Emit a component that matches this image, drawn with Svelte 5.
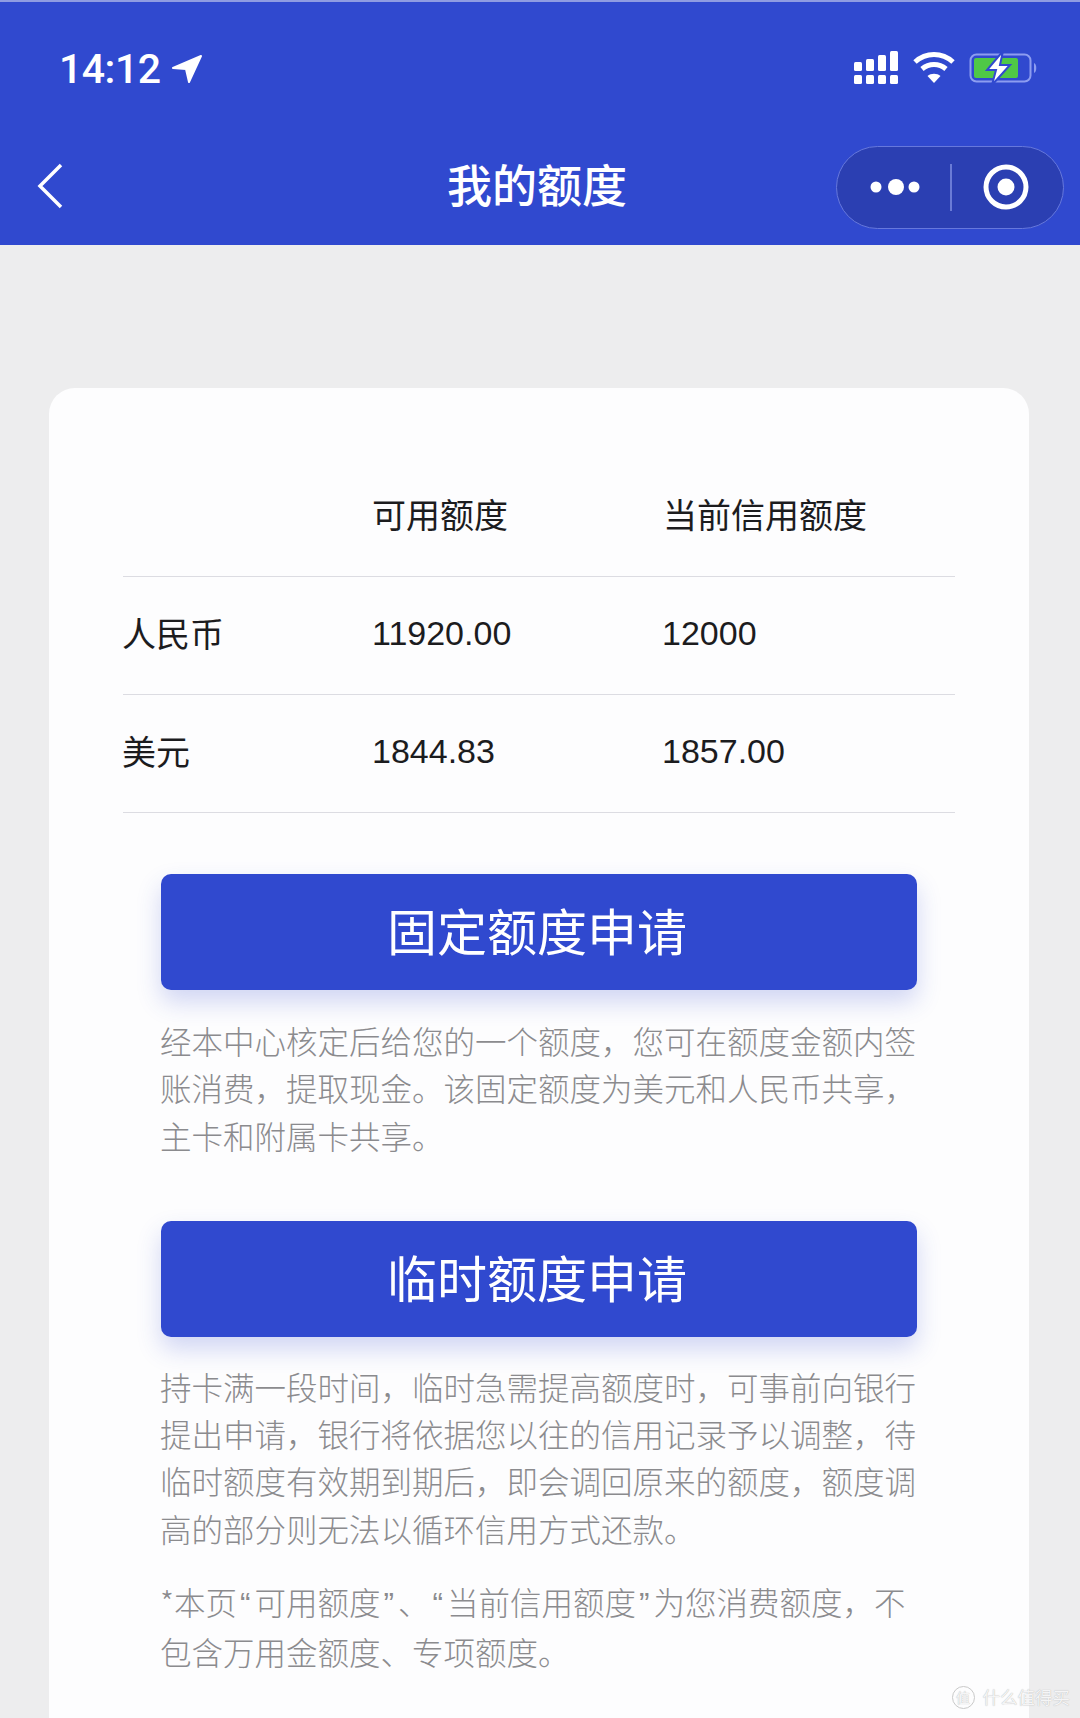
<script>
  const rows = [
    { name: '人民币', avail: '11920.00', limit: '12000' },
    { name: '美元', avail: '1844.83', limit: '1857.00' }
  ];
</script>

<div class="page" lang="zh-CN">
  <header class="top">
    <div class="status">
      <div class="clock">
        <span class="time">14:12</span>
        <svg class="loc" viewBox="0 0 32 30" width="32" height="30"><path d="M2 14 L30 2 L18 28 L15 15 Z" fill="#fff" stroke="#fff" stroke-width="2" stroke-linejoin="round"/></svg>
      </div>
      <div class="sys">
        <svg viewBox="0 0 46 34" width="46" height="34" fill="#fff">
          <rect x="1" y="11" width="8" height="9" rx="1.5"/><rect x="13" y="8" width="8" height="12" rx="1.5"/><rect x="25" y="4" width="8" height="16" rx="1.5"/><rect x="37" y="0" width="8" height="20" rx="1.5"/>
          <rect x="1" y="24" width="8" height="9" rx="1.5"/><rect x="13" y="24" width="8" height="9" rx="1.5"/><rect x="25" y="24" width="8" height="9" rx="1.5"/><rect x="37" y="24" width="8" height="9" rx="1.5"/>
        </svg>
        <svg viewBox="0 0 44 32" width="44" height="32" fill="none" stroke="#fff" stroke-width="5">
          <path d="M3 10 C14 0 30 0 41 10"/><path d="M10 17 C17 11 27 11 34 17"/><path d="M22 31 L15.5 24 C19 21 25 21 28.5 24 Z" fill="#fff" stroke="none"/>
        </svg>
        <svg viewBox="0 0 70 34" width="70" height="34">
          <rect x="1.5" y="3.5" width="60" height="27" rx="6" fill="none" stroke="#8d9df0" stroke-width="2"/>
          <rect x="5" y="7" width="44" height="20" rx="2" fill="#4fc846"/>
          <path d="M65 12 C68 13 68 21 65 22 Z" fill="#8d9df0"/>
          <path d="M34 0 L18 19 L27 19 L23 34 L41 14 L31 14 Z" fill="#fff" stroke="#3049cf" stroke-width="2"/>
        </svg>
      </div>
    </div>
    <nav class="bar">
      <svg class="back" viewBox="0 0 26 46" width="26" height="46"><path d="M24 2 L3 23 L24 44" fill="none" stroke="#fff" stroke-width="3.5"/></svg>
      <h1>我的额度</h1>
      <div class="capsule">
        <svg viewBox="0 0 50 20" width="50" height="20" fill="#fff"><circle cx="6" cy="10" r="5.5"/><circle cx="26" cy="10" r="8"/><circle cx="44" cy="10" r="5.5"/></svg>
        <span class="sep"></span>
        <svg viewBox="0 0 46 46" width="46" height="46"><circle cx="23" cy="23" r="20" fill="none" stroke="#fff" stroke-width="5"/><circle cx="23" cy="23" r="8.5" fill="#fff"/></svg>
      </div>
    </nav>
  </header>

  <main class="card">
    <div class="table">
      <div class="row head"><span></span><span class="label">可用额度</span><span class="label">当前信用额度</span></div>
      {#each rows as r}
        <div class="row"><span class="name">{r.name}</span><span class="num">{r.avail}</span><span class="num pull">{r.limit}</span></div>
      {/each}
    </div>

    <section class="block first">
      <button>固定额度申请</button>
      <p>经本中心核定后给您的一个额度，您可在额度金额内签<br>账消费，提取现金。该固定额度为美元和人民币共享，<br>主卡和附属卡共享。</p>
    </section>

    <section class="block second">
      <button>临时额度申请</button>
      <p class="tight">持卡满一段时间，临时急需提高额度时，可事前向银行<br>提出申请，银行将依据您以往的信用记录予以调整，待<br>临时额度有效期到期后，即会调回原来的额度，额度调<br>高的部分则无法以循环信用方式还款。</p>
      <p class="note">*本页<span class="q">“</span>可用额度<span class="q">”</span>、<span class="q">“</span>当前信用额度<span class="q">”</span>为您消费额度，不<br>包含万用金额度、专项额度。</p>
    </section>
  </main>

  <div class="mark">
    <span class="ring">值</span><span>什么值得买</span>
  </div>
</div>

<style>
  :global(body) { margin: 0; }
  .page {
    position: relative;
    width: 1080px;
    height: 1718px;
    overflow: hidden;
    background: #ededee;
    display: flex;
    flex-direction: column;
    font-family: "Noto Sans CJK SC", "Liberation Sans", sans-serif;
  }
  .top {
    height: 243px;
    border-top: 2px solid #8f9ce2;
    background: #3049cf;
    color: #fff;
    flex: none;
    display: flex;
    flex-direction: column;
  }
  .status {
    height: 96px;
    padding: 0 41px 0 59px;
    display: flex;
    align-items: flex-end;
    justify-content: space-between;
  }
  .clock { display: flex; align-items: center; gap: 10px; height: 46px; margin-bottom: 6px; }
  .time { font: 500 41px/46px Roboto, sans-serif; letter-spacing: -0.5px; }
  .sys { display: flex; align-items: center; gap: 13px; margin-bottom: 13px; }
  .bar {
    position: relative;
    height: 88px;
    margin-top: 45px;
    display: flex;
    align-items: center;
    justify-content: space-between;
    padding: 0 16px 0 37px;
  }
  .back { margin-top: -3px; }
  h1 {
    position: absolute;
    left: 447px;
    top: 11px;
    margin: 0;
    font-size: 45px;
    line-height: 60px;
    font-weight: 500;
  }
  .capsule {
    width: 228px;
    height: 83px;
    box-sizing: border-box;
    border: 1px solid #6678dc;
    border-radius: 42px;
    background: #2b3fb2;
    display: flex;
    align-items: center;
    padding-left: 33px;
  }
  .sep { width: 2px; height: 47px; background: #6a7bd6; margin: 0 31px 0 30px; }

  .card {
    flex: 1;
    margin: 143px 51px 0 49px;
    padding: 71px 74px 0;
    background: #fdfdfe;
    border-radius: 26px 26px 0 0;
  }
  .table { color: #1c1c1e; }
  .row {
    height: 117px;
    box-sizing: content-box;
    display: grid;
    grid-template-columns: 249px 291px 1fr;
    align-items: center;
    font-size: 34px;
    border-bottom: 1.5px solid #dcdce2;
  }
  .label { padding-bottom: 9px; }
  .name { padding-bottom: 7px; margin-left: -1px; }
  .num { font-family: "Liberation Sans", sans-serif; padding-bottom: 4px; }
  .pull { margin-left: -1px; }

  .block { padding: 0 38px 0 38px; }
  .first { margin-top: 61px; }
  .second { margin-top: 62px; }
  button {
    display: block;
    width: 100%;
    height: 116px;
    border: 0;
    border-radius: 10px;
    background: #3049cf;
    color: #fff;
    font-family: inherit;
    font-size: 50px;
    padding: 0 4px 6px 0;
    box-shadow: 0 12px 24px rgba(48, 73, 207, 0.22);
  }
  p {
    margin: 27px 0 0 -1px;
    font-size: 31.5px;
    line-height: 47.3px;
    color: #8b8b8e;
    white-space: nowrap;
    font-weight: 300;
  }
  .tight { margin-top: 26px; }
  .note { margin-top: 26px; }
  .q {
    font-family: "Liberation Sans", sans-serif;
    padding-left: 3px;
    letter-spacing: 4px;
  }
  .mark {
    position: absolute;
    right: 10px;
    top: 1682px;
    display: flex;
    align-items: center;
    gap: 8px;
    color: #f5f5f6;
    font-size: 17.5px;
    line-height: 30px;
    text-shadow: 0 0 1px #a8a8a8;
  }
  .ring {
    width: 21px;
    height: 21px;
    border: 1px solid #c9c9c9;
    border-radius: 50%;
    font-size: 14px;
    line-height: 21px;
    text-align: center;
  }
</style>
